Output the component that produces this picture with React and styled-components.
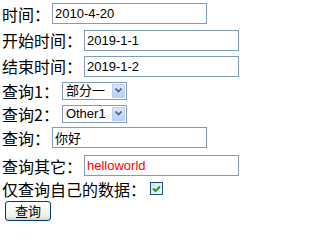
import React from "react";
import styled, { createGlobalStyle } from "styled-components";

const GlobalStyle = createGlobalStyle`
  html, body { margin: 0; padding: 0; background: #fff; }
  body { font-family: "Noto Sans CJK SC", "Liberation Sans", sans-serif; color: #000; }
`;

const Form = styled.div`
  display: flex;
  flex-direction: column;
  padding-left: 2px;
`;

const Row = styled.div`
  display: flex;
  align-items: center;
  gap: 2px;
  height: ${(p) => p.$h}px;
`;

const Label = styled.span`
  font-size: 16px;
  line-height: 16px;
  white-space: nowrap;
`;

const TextInput = styled.input`
  box-sizing: border-box;
  width: 155px;
  height: 21px;
  margin: 0;
  padding: 0 2px;
  border: 1px solid #7f9db9;
  background: #fff;
  font: 13px "Liberation Sans", "Noto Sans CJK SC", sans-serif;
  color: ${(p) => p.$color || "#000"};
  outline: none;
`;

const SelectWrap = styled.span`
  position: relative;
  display: flex;
  width: 65px;
  height: 18px;
  margin-left: 1px;
`;

const Select = styled.select`
  appearance: none;
  -webkit-appearance: none;
  display: block;
  box-sizing: border-box;
  width: 100%;
  height: 18px;
  min-height: 0;
  margin: 0;
  padding: 0 0 0 3px;
  border: 1px solid #7f9db9;
  border-radius: 0;
  background: #fff;
  font: 13px "Liberation Sans", "Noto Sans CJK SC", sans-serif;
  color: #000;
  line-height: 16px;
  outline: none;
`;

const Arrow = styled.span`
  position: absolute;
  top: 2px;
  right: 2px;
  bottom: 2px;
  width: 13px;
  box-sizing: border-box;
  border: 1px solid #bccdf6;
  background: linear-gradient(#dce6fc, #b9cdf8);
  display: flex;
  align-items: center;
  justify-content: center;
  pointer-events: none;
`;

const CheckBox = styled.span`
  box-sizing: border-box;
  width: 13px;
  height: 13px;
  margin-left: 2px;
  border: 1px solid #1c5180;
  background: linear-gradient(135deg, #dcdcd7, #ffffff);
  display: flex;
  align-items: center;
  justify-content: center;
`;

const Button = styled.button`
  box-sizing: border-box;
  width: 46px;
  height: 20px;
  margin: 0 0 0 3px;
  padding: 0;
  border: 1px solid #003c74;
  border-radius: 3px;
  background: linear-gradient(#ffffff, #f0f0ea 80%, #d6d0c5);
  font: 13px "Noto Sans CJK SC", sans-serif;
  line-height: 16px;
  color: #000;
`;

const Chevron = () => (
  <svg width="7" height="5" viewBox="0 0 7 5">
    <path d="M0.5 0.5 L3.5 3.5 L6.5 0.5" fill="none" stroke="#4d6185" strokeWidth="1.6" />
  </svg>
);

const Check = () => (
  <svg width="9" height="8" viewBox="0 0 9 8">
    <path d="M1 3.5 L3.5 6 L8 1.5" fill="none" stroke="#21a121" strokeWidth="2" />
  </svg>
);

const SelectBox = ({ options }) => (
  <SelectWrap>
    <Select defaultValue={options[0]}>
      {options.map((o) => (
        <option key={o}>{o}</option>
      ))}
    </Select>
    <Arrow>
      <Chevron />
    </Arrow>
  </SelectWrap>
);

export default function App() {
  return (
    <>
      <GlobalStyle />
      <Form>
        <Row $h={27}>
          <Label>时间：</Label>
          <TextInput defaultValue="2010-4-20" />
        </Row>
        <Row $h={26}>
          <Label>开始时间：</Label>
          <TextInput defaultValue="2019-1-1" />
        </Row>
        <Row $h={26}>
          <Label>结束时间：</Label>
          <TextInput defaultValue="2019-1-2" />
        </Row>
        <Row $h={23}>
          <Label>查询1：</Label>
          <SelectBox options={["部分一", "部分二"]} />
        </Row>
        <Row $h={23}>
          <Label>查询2：</Label>
          <SelectBox options={["Other1", "Other2"]} />
        </Row>
        <Row $h={25}>
          <Label>查询：</Label>
          <TextInput defaultValue="你好" />
        </Row>
        <Row $h={31}>
          <Label>查询其它：</Label>
          <TextInput defaultValue="helloworld" $color="#ff0000" />
        </Row>
        <Row $h={15}>
          <Label>仅查询自己的数据：</Label>
          <CheckBox>
            <Check />
          </CheckBox>
        </Row>
        <Row $h={30}>
          <Button>查询</Button>
        </Row>
      </Form>
    </>
  );
}
